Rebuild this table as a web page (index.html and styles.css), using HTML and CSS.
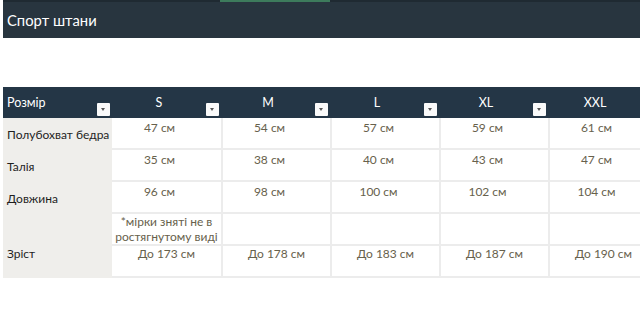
FILE: index.html
```html
<!DOCTYPE html>
<html lang="uk">
<head>
<meta charset="utf-8">
<title>Спорт штани</title>
<link rel="stylesheet" href="styles.css">
</head>
<body>
<div class="page">
  <div class="titlebar">
    <span class="accent"></span>
    <h1 class="title">Спорт штани</h1>
  </div>
  <table class="sizes">
    <colgroup>
      <col class="c"><col class="c"><col class="c"><col class="c"><col class="c"><col class="c">
    </colgroup>
    <thead>
      <tr>
        <th class="h h-label">Розмір<span class="dd"></span></th>
        <th class="h">S<span class="dd"></span></th>
        <th class="h">M<span class="dd"></span></th>
        <th class="h">L<span class="dd"></span></th>
        <th class="h">XL<span class="dd"></span></th>
        <th class="h">XXL<span class="dd"></span></th>
      </tr>
    </thead>
    <tbody>
      <tr>
        <td class="lbl">Полубохват бедра</td>
        <td class="v">47 см</td><td class="v">54 см</td><td class="v">57 см</td><td class="v">59 см</td><td class="v">61 см</td>
      </tr>
      <tr>
        <td class="lbl">Талія</td>
        <td class="v">35 см</td><td class="v">38 см</td><td class="v">40 см</td><td class="v">43 см</td><td class="v">47 см</td>
      </tr>
      <tr>
        <td class="lbl">Довжина</td>
        <td class="v">96 см</td><td class="v">98 см</td><td class="v">100 см</td><td class="v">102 см</td><td class="v">104 см</td>
      </tr>
      <tr>
        <td class="lbl"></td>
        <td class="v note">*мірки зняті не в<br>ростягнутому виді</td><td class="v"></td><td class="v"></td><td class="v"></td><td class="v"></td>
      </tr>
      <tr class="row-height">
        <td class="lbl lbl-top">Зріст</td>
        <td class="v full">До 173 см</td><td class="v full">До 178 см</td><td class="v full">До 183 см</td><td class="v full">До 187 см</td><td class="v full">До 190 см</td>
      </tr>
    </tbody>
  </table>
</div>
</body>
</html>
```
FILE: styles.css
```css
html, body {
  margin: 0;
  padding: 0;
  overflow: hidden;
  background: #ffffff;
}

.page {
  padding-left: 3px;
  font-family: Lato, "Open Sans", "Liberation Sans", sans-serif;
}

.titlebar {
  position: relative;
  height: 38px;
  background: #28353f;
  border-top: 2px solid #1f2a32;
  box-sizing: border-box;
  display: flex;
  align-items: center;
}

.accent {
  position: absolute;
  left: 217px;
  top: -2px;
  width: 110px;
  height: 2px;
  background: #3d7b5c;
}

.title {
  margin: 0;
  padding-left: 4px;
  font-weight: normal;
  font-size: 14.8px;
  color: #ffffff;
  line-height: 20px;
}

.sizes {
  margin-top: 49px;
  border-collapse: separate;
  border-spacing: 0;
  table-layout: fixed;
  width: 654px;
}

.c {
  width: 109px;
}

.h {
  position: relative;
  height: 31px;
  padding: 0 15px 0 0;
  box-sizing: border-box;
  background: #243646;
  color: #ffffff;
  font-weight: normal;
  font-size: 12.5px;
  text-align: center;
  vertical-align: middle;
}

.h-label {
  text-align: left;
  padding-left: 4px;
}

.dd {
  position: absolute;
  right: 2px;
  bottom: 2px;
  width: 13px;
  height: 13px;
  background: #fafafa;
  border-radius: 1px;
}

.dd::after {
  content: "";
  position: absolute;
  left: 4px;
  top: 5px;
  border-left: 2.5px solid transparent;
  border-right: 2.5px solid transparent;
  border-top: 3px solid #555555;
}

.lbl {
  height: 32px;
  box-sizing: border-box;
  padding: 0 0 0 4px;
  background: #efeeeb;
  color: #1e1e1e;
  font-size: 12px;
  vertical-align: middle;
  white-space: nowrap;
}

.lbl-top {
  vertical-align: top;
  padding-top: 0;
}

.v {
  height: 32px;
  box-sizing: border-box;
  padding: 2px 14px 0 0;
  border-left: 2px solid #ececec;
  border-bottom: 2px solid #ececec;
  color: #67614c;
  font-size: 12px;
  line-height: 16px;
  text-align: center;
  vertical-align: top;
  white-space: nowrap;
}

.lbl + .v {
  border-left: none;
}

.v.full {
  padding-right: 0;
  padding-top: 0;
}

.note {
  padding: 0;
  line-height: 15px;
}
```
